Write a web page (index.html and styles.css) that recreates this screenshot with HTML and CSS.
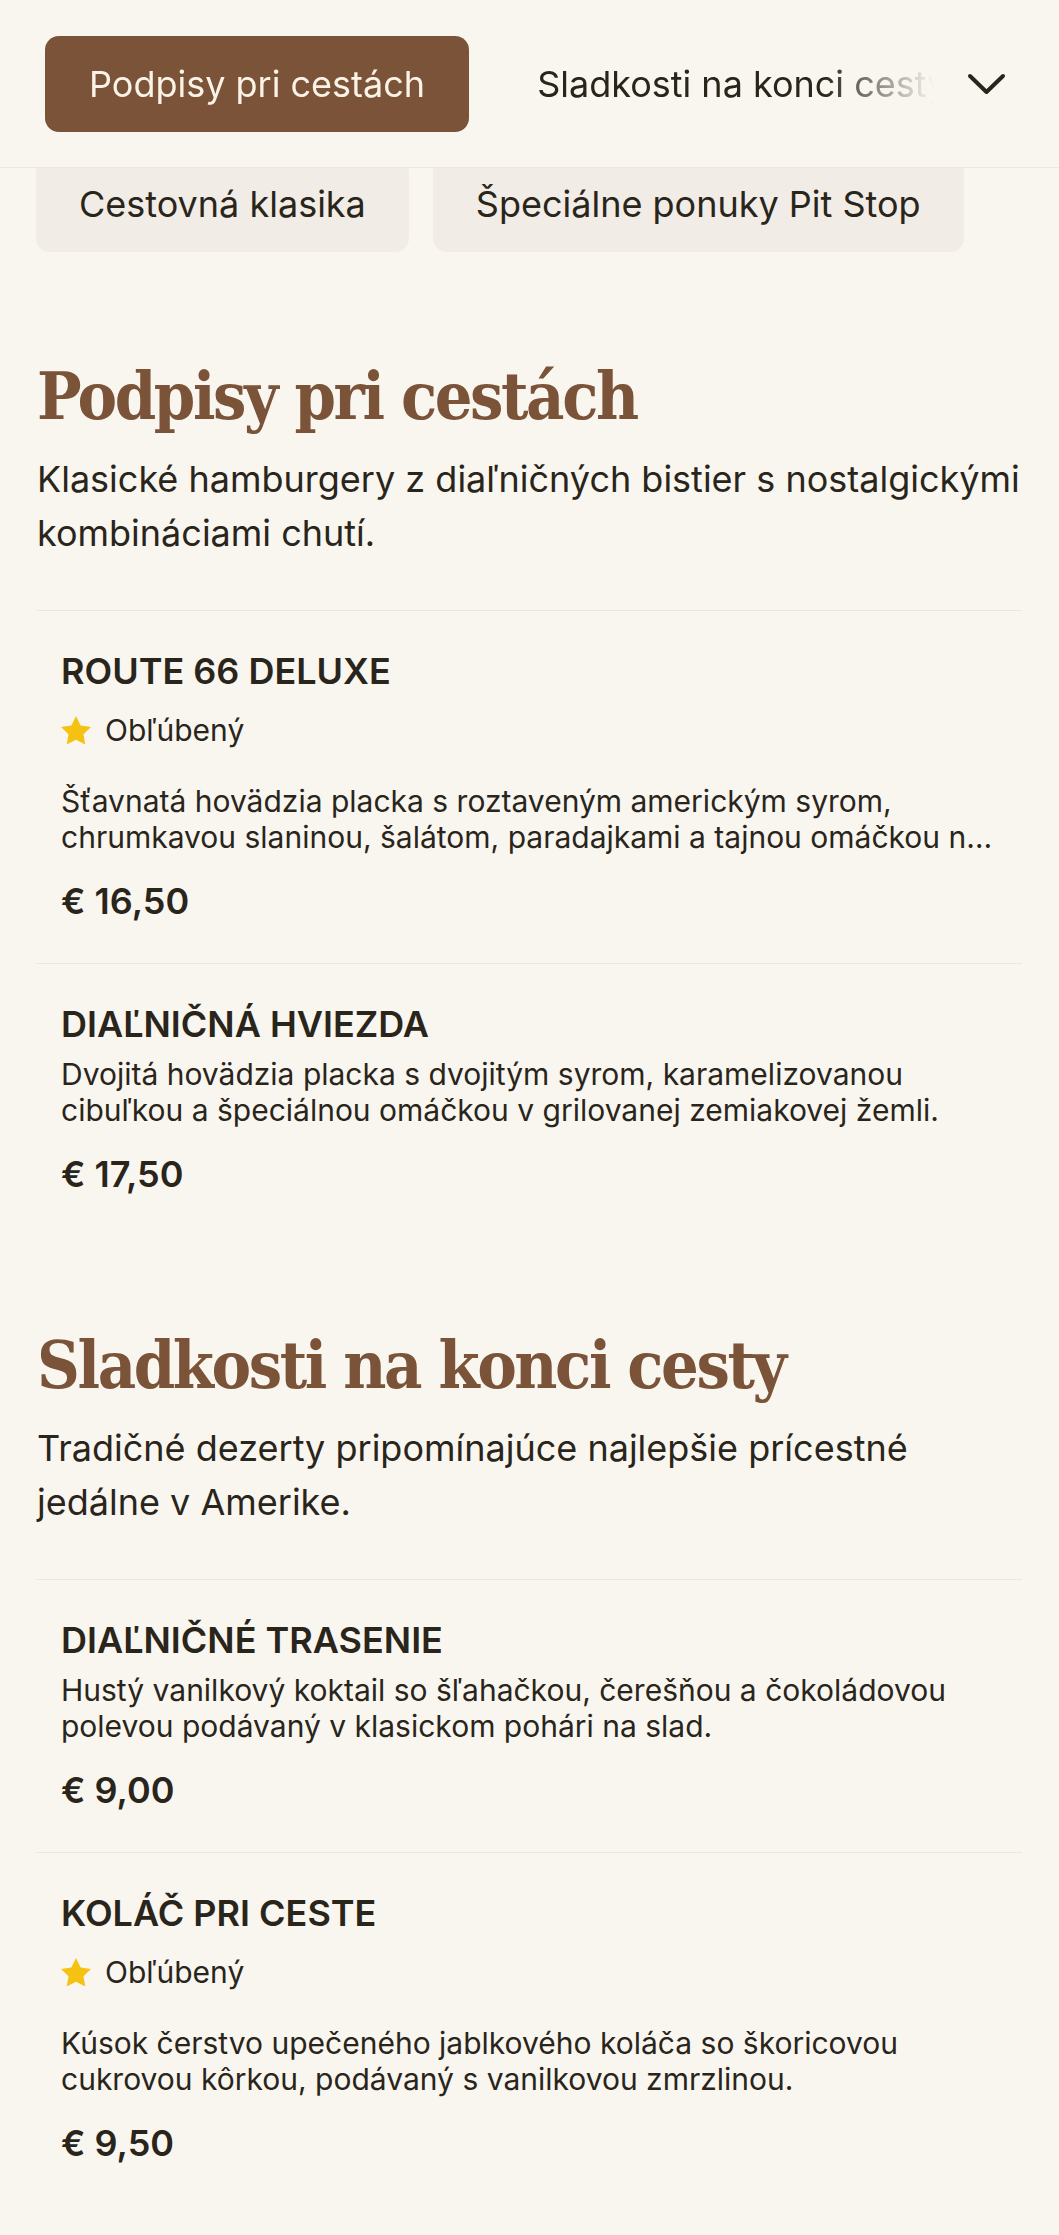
FILE: index.html
```html
<!DOCTYPE html>
<html lang="sk">
<head>
<meta charset="utf-8">
<title>Menu</title>
<link rel="stylesheet" href="styles.css">
</head>
<body>
<header class="topbar">
  <nav class="tabs">
    <a class="tab tab-active">Podpisy pri cestách</a>
    <a class="tab">Sladkosti na konci cesty</a>
  </nav>
  <button class="more" aria-label="Viac">
    <svg class="chevron" width="39" height="22" viewBox="0 0 39 22"><polyline points="3,3 19.5,19 36,3" fill="none" stroke="#2a251b" stroke-width="4" stroke-linecap="round" stroke-linejoin="round"/></svg>
  </button>
</header>
<div class="subtabs">
  <span class="chip">Cestovná klasika</span>
  <span class="chip">Špeciálne ponuky Pit Stop</span>
</div>
<main class="menu">
  <section class="category">
    <h2 class="category-title">Podpisy pri cestách</h2>
    <p class="category-desc">Klasické hamburgery z diaľničných bistier s nostalgickými kombináciami chutí.</p>
    <ul class="items">
      <li class="item">
        <h3 class="item-name">ROUTE 66 DELUXE</h3>
        <div class="badge"><svg class="star" width="30" height="28.5" viewBox="2 2 20 19.02"><polygon points="12,2 15.09,8.26 22,9.27 17,14.14 18.18,21.02 12,17.77 5.82,21.02 7,14.14 2,9.27 8.91,8.26" fill="#f5c214"/></svg><span>Obľúbený</span></div>
        <p class="item-desc">Šťavnatá hovädzia placka s roztaveným americkým syrom, chrumkavou slaninou, šalátom, paradajkami a tajnou omáčkou na opečenej žemli.</p>
        <div class="item-price">€ 16,50</div>
      </li>
      <li class="item">
        <h3 class="item-name">DIAĽNIČNÁ HVIEZDA</h3>
        <p class="item-desc">Dvojitá hovädzia placka s dvojitým syrom, karamelizovanou cibuľkou a špeciálnou omáčkou v grilovanej zemiakovej žemli.</p>
        <div class="item-price">€ 17,50</div>
      </li>
    </ul>
  </section>
  <section class="category">
    <h2 class="category-title">Sladkosti na konci cesty</h2>
    <p class="category-desc">Tradičné dezerty pripomínajúce najlepšie prícestné jedálne v Amerike.</p>
    <ul class="items">
      <li class="item">
        <h3 class="item-name">DIAĽNIČNÉ TRASENIE</h3>
        <p class="item-desc">Hustý vanilkový koktail so šľahačkou, čerešňou a čokoládovou polevou podávaný v klasickom pohári na slad.</p>
        <div class="item-price">€ 9,00</div>
      </li>
      <li class="item">
        <h3 class="item-name">KOLÁČ PRI CESTE</h3>
        <div class="badge"><svg class="star" width="30" height="28.5" viewBox="2 2 20 19.02"><polygon points="12,2 15.09,8.26 22,9.27 17,14.14 18.18,21.02 12,17.77 5.82,21.02 7,14.14 2,9.27 8.91,8.26" fill="#f5c214"/></svg><span>Obľúbený</span></div>
        <p class="item-desc">Kúsok čerstvo upečeného jablkového koláča so škoricovou cukrovou kôrkou, podávaný s vanilkovou zmrzlinou.</p>
        <div class="item-price">€ 9,50</div>
      </li>
    </ul>
  </section>
</main>
</body>
</html>
```

FILE: styles.css
```css
* { box-sizing: border-box; }

body {
  margin: 0;
  background: #f9f6f0;
  color: #2a251b;
  font-family: Inter, "Noto Sans", sans-serif;
}

.topbar {
  position: sticky;
  top: 0;
  z-index: 2;
  display: flex;
  align-items: center;
  height: 168px;
  padding: 0 31px 0 45px;
  background: #f9f6f0;
  border-bottom: 1px solid #ede7de;
}

.tabs {
  flex: 1;
  min-width: 0;
  display: flex;
  gap: 24px;
  overflow: hidden;
  white-space: nowrap;
  -webkit-mask-image: linear-gradient(to right, #000 calc(100% - 120px), transparent calc(100% - 10px));
  mask-image: linear-gradient(to right, #000 calc(100% - 120px), transparent calc(100% - 10px));
}

.tab {
  flex: none;
  padding: 24px 44px;
  font-size: 36px;
  line-height: 48px;
  border-radius: 14px;
  color: #2a251b;
}

.tab-active {
  background: #7a5338;
  color: #fbf3e8;
}

.more {
  flex: none;
  width: 84px;
  height: 96px;
  display: flex;
  align-items: center;
  justify-content: center;
  padding: 0;
  border: 0;
  background: none;
}

.chevron { display: block; }

.subtabs {
  display: flex;
  gap: 24px;
  padding: 0 36px;
  margin-top: -12px;
}

.chip {
  flex: none;
  padding: 24px 43px;
  font-size: 36px;
  line-height: 48px;
  white-space: nowrap;
  background: #f1ece5;
  border-radius: 14px;
}

.menu {
  padding: 15px 37px 0;
}

.category {
  padding-top: 90px;
}

.category-title {
  margin: 0;
  font-family: "DejaVu Serif Condensed", "DejaVu Serif", serif;
  font-stretch: condensed;
  font-weight: 700;
  font-size: 66px;
  line-height: 79px;
  letter-spacing: -2.4px;
  color: #7a5338;
}

.category-desc {
  margin: 16px 0 50px;
  font-size: 36px;
  line-height: 54px;
}

.items {
  list-style: none;
  margin: 0;
  padding: 0;
}

.item {
  border-top: 1px solid #ece6dd;
  padding: 38px 24px 40px;
}

.item-name {
  margin: 0 0 10px;
  font-size: 36px;
  line-height: 44px;
  font-weight: 600;
}

.badge {
  display: flex;
  align-items: center;
  gap: 14px;
  margin: 19px 0 35px;
  font-size: 30px;
  line-height: 36px;
}

.star { display: block; flex: none; }

.item-desc {
  margin: 0;
  font-size: 30px;
  line-height: 36px;
  display: -webkit-box;
  -webkit-line-clamp: 2;
  -webkit-box-orient: vertical;
  overflow: hidden;
}

.item-price {
  margin-top: 24px;
  font-size: 36px;
  line-height: 44px;
  font-weight: 600;
}
```
